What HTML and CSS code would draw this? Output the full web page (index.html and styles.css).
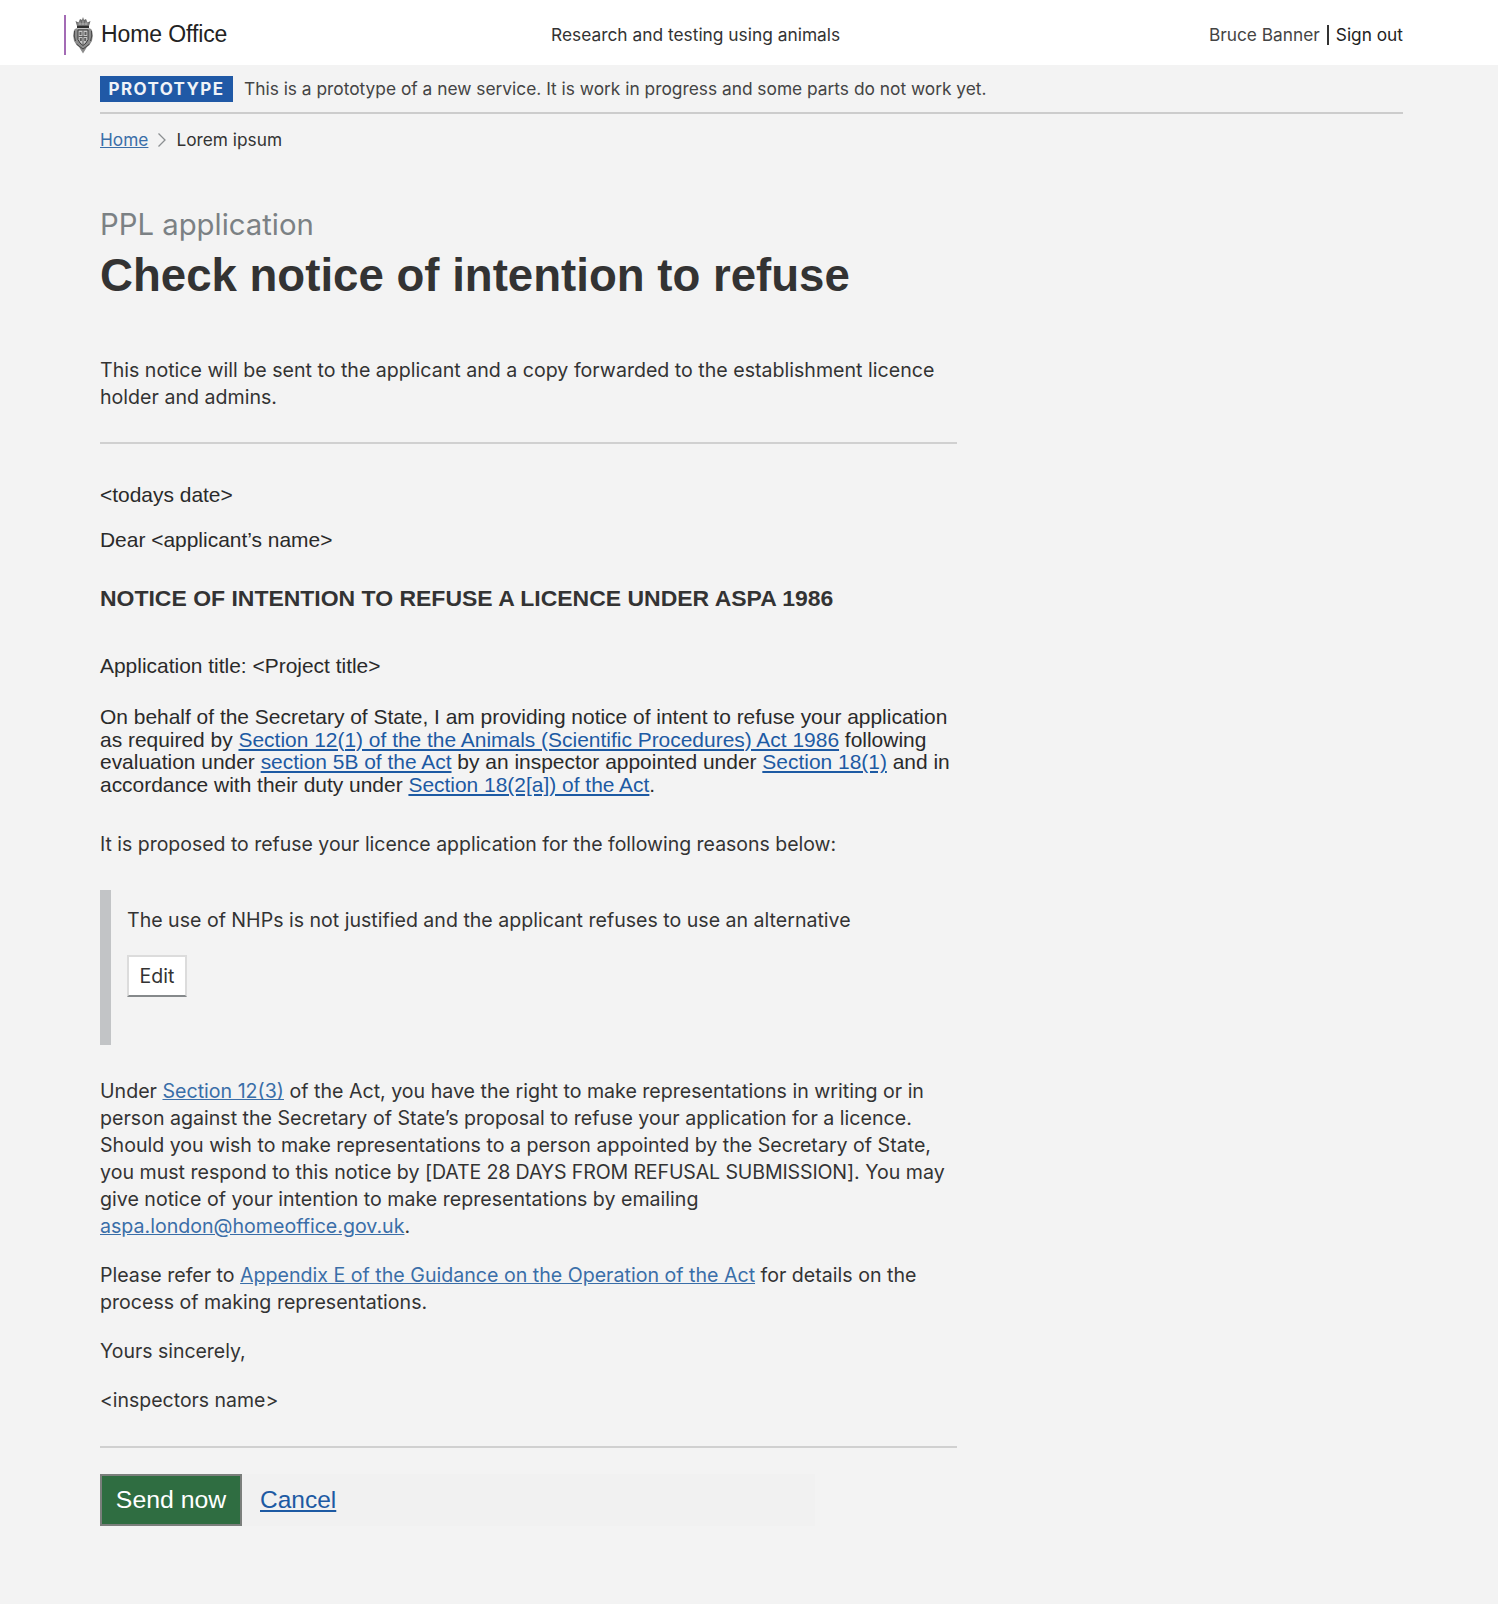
FILE: index.html
```html
<!DOCTYPE html>
<html lang="en">
<head>
    <meta charset="UTF-8">
    <meta name="viewport" content="width=device-width, initial-scale=1.0">
    <title>Check notice of intention to refuse</title>
    <link rel="stylesheet" href="styles.css">
</head>
<body>
    <header class="site-header">
        <div class="logo">
            <svg class="crest" width="22" height="38" viewBox="0 0 22 38" aria-hidden="true">
                <path d="M5 10 L3.5 5 L6.5 6.5 L8 3 L10 4 L11 1 L12 4 L14 3 L15.5 6.5 L18.5 5 L17 10 Z" fill="#6a6a6a"/>
                <path d="M5.5 8 H16.5 M8 5.5 V9 M11 4.5 V9 M14 5.5 V9" stroke="#c9c9c9" stroke-width="0.7"/>
                <path d="M5 10 H17 V12 H5 Z" fill="#2e2e2e"/>
                <path d="M2 14 Q4 11.5 6 12.5 H16 Q18 11.5 20 14 Q21.5 20 20 25 Q18 29 15 31 L11 37.5 L7 31 Q4 29 2 25 Q0.5 20 2 14 Z" fill="#8c8c8c"/>
                <path d="M2.5 15 Q1.5 20 3.5 25 M19.5 15 Q20.5 20 18.5 25 M4.5 28 Q8 31 11 33 Q14 31 17.5 28" fill="none" stroke="#3c3c3c" stroke-width="0.9"/>
                <path d="M6 14 H16 V23.5 Q14.5 27.5 11 29.5 Q7.5 27.5 6 23.5 Z" fill="#c8c8c8" stroke="#3a3a3a" stroke-width="1"/>
                <path d="M11 14.5 V29 M6.5 20.5 H15.5" stroke="#5a5a5a" stroke-width="1"/>
                <path d="M7.5 16 H9.5 V19 H7.5 Z M12.5 16 H14.5 V19 H12.5 Z M7.8 22 H9.8 V25 H7.8 Z M12.2 22 H14.2 V25 H12.2 Z" fill="#5f5f5f"/>
            </svg>
            <span class="logo-text">Home Office</span>
        </div>
        <div class="service-name">Research and testing using animals</div>
        <div class="user-nav"><span>Bruce Banner</span><span class="user-link">Sign out</span></div>
    </header>

    <div class="container">
        <div class="phase-banner">
            <span class="phase-tag">PROTOTYPE</span>
            <span>This is a prototype of a new service. It is work in progress and some parts do not work yet.</span>
        </div>
        <nav class="breadcrumb">
            <a href="#">Home</a>
            <svg class="chevron" width="10" height="16" viewBox="0 0 10 16" aria-hidden="true"><path d="M1.5 1.5 L8 8 L1.5 14.5" fill="none" stroke="#8b8f91" stroke-width="1.3"/></svg>
            <span>Lorem ipsum</span>
        </nav>

        <main class="content">
            <div class="caption">PPL application</div>
            <h1>Check notice of intention to refuse</h1>

            <p class="intro">This notice will be sent to the applicant and a copy forwarded to the establishment licence holder and admins.</p>
            <hr class="rule rule-top">

            <p class="letter date">&lt;todays date&gt;</p>
            <p class="letter dear">Dear &lt;applicant’s name&gt;</p>
            <h2>NOTICE OF INTENTION TO REFUSE A LICENCE UNDER ASPA 1986</h2>
            <p class="letter app-title">Application title: &lt;Project title&gt;</p>
            <p class="letter behalf">On behalf of the Secretary of State, I am providing notice of intent to refuse your application as required by <a href="#">Section 12(1) of the the Animals (Scientific Procedures) Act 1986</a> following evaluation under <a href="#">section 5B of the Act</a> by an inspector appointed under <a href="#">Section 18(1)</a> and in accordance with their duty under <a href="#">Section 18(2[a]) of the Act</a>.</p>

            <p class="body proposed">It is proposed to refuse your licence application for the following reasons below:</p>

            <div class="inset">
                <p class="body inset-text">The use of NHPs is not justified and the applicant refuses to use an alternative</p>
                <button class="edit-btn">Edit</button>
            </div>

            <p class="body under">Under <a class="soft" href="#">Section 12(3)</a> of the Act, you have the right to make representations in writing or in person against the Secretary of State’s proposal to refuse your application for a licence. Should you wish to make representations to a person appointed by the Secretary of State, you must respond to this notice by <span class="caps">[DATE 28 DAYS FROM REFUSAL SUBMISSION]</span>. You may give notice of your intention to make representations by emailing <a class="soft" href="#">aspa.london@homeoffice.gov.uk</a>.</p>
            <p class="body refer">Please refer to <a class="soft" href="#">Appendix E of the Guidance on the Operation of the Act</a> for details on the process of making representations.</p>
            <p class="body yours">Yours sincerely,</p>
            <p class="body inspector">&lt;inspectors name&gt;</p>
            <hr class="rule rule-bottom">

            <div class="actions">
                <button class="send-btn">Send now</button>
                <a class="cancel" href="#">Cancel</a>
            </div>
        </main>
    </div>
</body>
</html>
```

FILE: styles.css
```css
* {
    margin: 0;
    padding: 0;
    box-sizing: border-box;
}

body {
    font-family: Inter, 'Liberation Sans', sans-serif;
    background: #f3f3f3;
    color: #333;
    font-size: 19px;
    min-height: 1604px;
}

a {
    color: #3a6ea8;
}

.site-header {
    height: 65px;
    background: #fff;
    display: grid;
    grid-template-columns: 487px 1fr auto;
    align-items: center;
    padding: 4px 95px 0 64px;
}

.logo {
    height: 40px;
    display: flex;
    align-items: center;
    gap: 7px;
    border-left: 2px solid #a36bb5;
    padding-left: 6px;
}

.logo-text {
    font-family: 'Liberation Sans', sans-serif;
    font-size: 23px;
    letter-spacing: -0.1px;
    color: #222;
}

.service-name {
    font-size: 17.35px;
    color: #333;
}

.user-nav {
    font-size: 17.3px;
    color: #444;
    display: flex;
    align-items: center;
}

.user-link {
    margin-left: 7px;
    padding-left: 7px;
    border-left: 2px solid #333;
    color: #222;
    line-height: 20px;
}

.container {
    padding: 0 95px 0 100px;
}

.phase-banner {
    height: 49px;
    display: flex;
    align-items: center;
    gap: 11px;
    border-bottom: 2px solid #ccc;
    font-size: 17.33px;
    color: #444;
}

.phase-tag {
    background: #2059a6;
    color: #f0f3f8;
    font-weight: 700;
    font-size: 17px;
    letter-spacing: 1.4px;
    height: 26px;
    line-height: 27px;
    width: 133px;
    text-align: center;
}

.breadcrumb {
    display: flex;
    align-items: center;
    gap: 9px;
    height: 21px;
    margin-top: 15px;
    font-size: 17.3px;
}

.content {
    width: 857px;
}

.caption {
    margin-top: 57px;
    font-size: 29.3px;
    line-height: 36px;
    color: #7b8184;
}

h1 {
    font-family: 'Liberation Sans', sans-serif;
    font-size: 45.6px;
    line-height: 60px;
    color: #333;
    margin-top: 3px;
}

.intro {
    margin-top: 51px;
    font-size: 19.6px;
    line-height: 27px;
    width: 850px;
}

.rule {
    border: 0;
    border-top: 2px solid #d0d0d0;
}

.rule-top {
    margin-top: 31px;
}

.letter {
    font-family: 'Liberation Sans', sans-serif;
    font-size: 20.95px;
    color: #2a2a2a;
}

.date {
    margin-top: 39px;
    line-height: 24px;
}

.dear {
    margin-top: 21px;
    line-height: 24px;
}

h2 {
    font-family: 'Liberation Sans', sans-serif;
    font-size: 22.97px;
    line-height: 28px;
    color: #333;
    margin-top: 32px;
}

.app-title {
    margin-top: 42px;
    line-height: 24px;
}

.behalf {
    margin-top: 28px;
    line-height: 22.6px;
    width: 850px;
}

.behalf a,
.cancel {
    color: #1d5aa3;
}

.body {
    font-size: 19.47px;
    line-height: 27px;
}

.proposed {
    margin-top: 35px;
}

.inset {
    margin-top: 32px;
    height: 155px;
    border-left: 11px solid #c2c4c6;
    padding: 17px 0 0 16px;
}

.inset-text {
    font-size: 19.57px;
}

.edit-btn {
    display: block;
    margin-top: 21px;
    width: 60px;
    height: 42px;
    background: #fff;
    border: 2px solid #dcdcdc;
    border-bottom: 2px solid #85898b;
    font-family: Inter, sans-serif;
    font-size: 19.5px;
    color: #333;
}

.under {
    margin-top: 33px;
    width: 850px;
    font-size: 19.6px;
}

.caps {
    letter-spacing: -0.15px;
}

.refer {
    margin-top: 22px;
    width: 850px;
    font-size: 19.6px;
}

.yours {
    margin-top: 22px;
}

.inspector {
    margin-top: 22px;
}

.rule-bottom {
    margin-top: 32px;
}

.actions {
    margin-top: 26px;
    width: 715px;
    height: 52px;
    display: flex;
    align-items: center;
    gap: 18px;
    background: #f1f1f1;
}

.send-btn {
    width: 142px;
    height: 52px;
    background: #2f6d41;
    border: 2px solid #7b7f7c;
    color: #fff;
    font-family: 'Liberation Sans', sans-serif;
    font-size: 24.8px;
}

.cancel {
    font-family: 'Liberation Sans', sans-serif;
    font-size: 24.5px;
}
```
